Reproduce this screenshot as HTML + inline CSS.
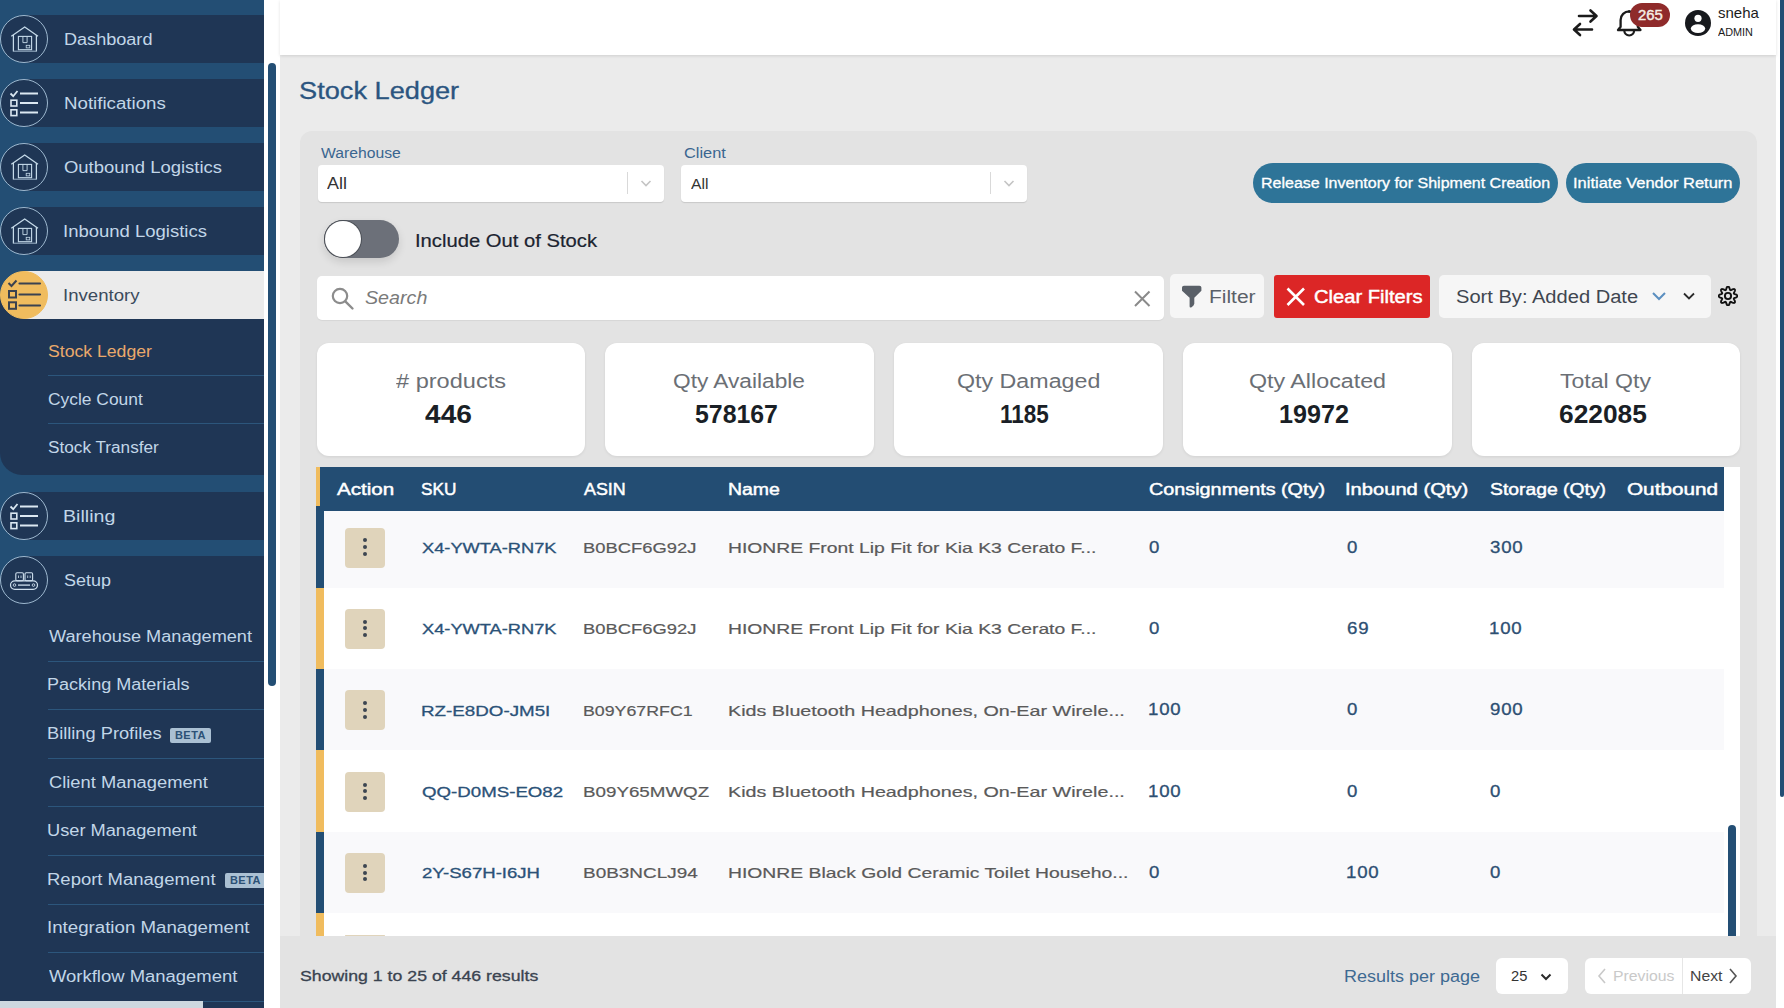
<!DOCTYPE html>
<html><head><meta charset="utf-8"><style>
html,body{margin:0;padding:0;}
body{width:1784px;height:1008px;overflow:hidden;position:relative;background:#fff;font-family:"Liberation Sans",sans-serif;}
.b{position:absolute;}
.t{position:absolute;white-space:nowrap;line-height:1;transform-origin:0 0;z-index:5;}
.beta{background:#aac0d3;color:#2c5176;font-size:11px;font-weight:700;line-height:15px;text-align:center;letter-spacing:0.5px;border-radius:2px;}
</style></head><body>
<div class="b" style="left:0px;top:0px;width:264px;height:1008px;background:#234e74;"></div>
<div class="b" style="left:24px;top:15px;width:240px;height:48px;background:#1f3655;"></div>
<div class="b" style="left:24px;top:79px;width:240px;height:48px;background:#1f3655;"></div>
<div class="b" style="left:24px;top:143px;width:240px;height:48px;background:#1f3655;"></div>
<div class="b" style="left:24px;top:207px;width:240px;height:48px;background:#1f3655;"></div>
<div class="b" style="left:24px;top:492px;width:240px;height:48px;background:#1f3655;"></div>
<div class="b" style="left:24px;top:556px;width:240px;height:48px;background:#1f3655;"></div>
<div class="b" style="left:0px;top:580px;width:264px;height:428px;background:#1f3655;"></div>
<div class="b" style="left:24px;top:271px;width:240px;height:48px;background:#ebebeb;"></div>
<div class="b" style="left:0px;top:295px;width:264px;height:180px;background:#1f3655;border-bottom-left-radius:22px;"></div>
<div class="b" style="left:24px;top:271px;width:240px;height:48px;background:#ebebeb;"></div>
<div class="b" style="left:48px;top:375px;width:216px;height:1px;background:#2c567c;"></div>
<div class="b" style="left:48px;top:423px;width:216px;height:1px;background:#2c567c;"></div>
<div class="b" style="left:48px;top:661px;width:216px;height:1px;background:#2c567c;"></div>
<div class="b" style="left:48px;top:709px;width:216px;height:1px;background:#2c567c;"></div>
<div class="b" style="left:48px;top:758px;width:216px;height:1px;background:#2c567c;"></div>
<div class="b" style="left:48px;top:806px;width:216px;height:1px;background:#2c567c;"></div>
<div class="b" style="left:48px;top:855px;width:216px;height:1px;background:#2c567c;"></div>
<div class="b" style="left:48px;top:904px;width:216px;height:1px;background:#2c567c;"></div>
<div class="b" style="left:48px;top:952px;width:216px;height:1px;background:#2c567c;"></div>
<div class="b" style="left:48px;top:1001px;width:216px;height:1px;background:#2c567c;"></div>
<svg class="b" style="left:0;top:0px" width="56" height="80" viewBox="0 0 56 80"><circle cx="24" cy="39" r="23.5" fill="#1f3655" stroke="#9db8cf" stroke-width="1"/><path d="M11.3 36.2 L24.7 27 L38 36.2" fill="none" stroke="#c6dbea" stroke-width="1.25"/>
<path d="M13.4 35 V51.5 M36.4 35 V51.5" stroke="#c6dbea" stroke-width="1.25"/>
<path d="M13.4 51.2 H36.4" stroke="#9fb6ca" stroke-width="1"/>
<rect x="18.4" y="36.4" width="13.2" height="13.3" fill="none" stroke="#c6dbea" stroke-width="1.1"/>
<path d="M22.9 36.4 V42.6 H27.1 V36.4" fill="none" stroke="#c6dbea" stroke-width="0.9"/>
<rect x="26.2" y="45.3" width="3.6" height="2.6" fill="none" stroke="#c6dbea" stroke-width="0.8"/></svg>
<svg class="b" style="left:0;top:64px" width="56" height="80" viewBox="0 0 56 80"><circle cx="24" cy="39" r="23.5" fill="#1f3655" stroke="#9db8cf" stroke-width="1"/><g transform="translate(0,0)">
<path d="M10.5 29.5 L13.2 32.2 L17.5 27" fill="none" stroke="#dbe8f2" stroke-width="1.8"/>
<rect x="11" y="36.2" width="5.8" height="5.8" fill="none" stroke="#dbe8f2" stroke-width="1.6"/>
<rect x="11" y="45.8" width="5.8" height="5.8" fill="none" stroke="#dbe8f2" stroke-width="1.6"/>
<path d="M20 29.5 H38 M20 39 H38 M20 48.5 H38" stroke="#dbe8f2" stroke-width="1.8"/>
</g></svg>
<svg class="b" style="left:0;top:128px" width="56" height="80" viewBox="0 0 56 80"><circle cx="24" cy="39" r="23.5" fill="#1f3655" stroke="#9db8cf" stroke-width="1"/><path d="M11.3 36.2 L24.7 27 L38 36.2" fill="none" stroke="#c6dbea" stroke-width="1.25"/>
<path d="M13.4 35 V51.5 M36.4 35 V51.5" stroke="#c6dbea" stroke-width="1.25"/>
<path d="M13.4 51.2 H36.4" stroke="#9fb6ca" stroke-width="1"/>
<rect x="18.4" y="36.4" width="13.2" height="13.3" fill="none" stroke="#c6dbea" stroke-width="1.1"/>
<path d="M22.9 36.4 V42.6 H27.1 V36.4" fill="none" stroke="#c6dbea" stroke-width="0.9"/>
<rect x="26.2" y="45.3" width="3.6" height="2.6" fill="none" stroke="#c6dbea" stroke-width="0.8"/></svg>
<svg class="b" style="left:0;top:192px" width="56" height="80" viewBox="0 0 56 80"><circle cx="24" cy="39" r="23.5" fill="#1f3655" stroke="#9db8cf" stroke-width="1"/><path d="M11.3 36.2 L24.7 27 L38 36.2" fill="none" stroke="#c6dbea" stroke-width="1.25"/>
<path d="M13.4 35 V51.5 M36.4 35 V51.5" stroke="#c6dbea" stroke-width="1.25"/>
<path d="M13.4 51.2 H36.4" stroke="#9fb6ca" stroke-width="1"/>
<rect x="18.4" y="36.4" width="13.2" height="13.3" fill="none" stroke="#c6dbea" stroke-width="1.1"/>
<path d="M22.9 36.4 V42.6 H27.1 V36.4" fill="none" stroke="#c6dbea" stroke-width="0.9"/>
<rect x="26.2" y="45.3" width="3.6" height="2.6" fill="none" stroke="#c6dbea" stroke-width="0.8"/></svg>
<svg class="b" style="left:0;top:256px" width="56" height="80" viewBox="0 0 56 80"><circle cx="24" cy="39" r="23.5" fill="#f0bc5e" stroke="#f0bc5e" stroke-width="1"/><path d="M8.5 27 L11.5 30 L16.5 24.5" fill="none" stroke="#3a4250" stroke-width="2"/>
<rect x="9" y="35" width="7" height="6.5" fill="none" stroke="#3a4250" stroke-width="2"/>
<rect x="9" y="46.3" width="7" height="6.5" fill="none" stroke="#3a4250" stroke-width="2"/>
<path d="M19.5 27.5 H40 M19.5 38.5 H40 M19.5 49.5 H40" stroke="#3a4250" stroke-width="2.2" stroke-linecap="round"/></svg>
<svg class="b" style="left:0;top:477px" width="56" height="80" viewBox="0 0 56 80"><circle cx="24" cy="39" r="23.5" fill="#1f3655" stroke="#9db8cf" stroke-width="1"/><g transform="translate(0,0)">
<path d="M10.5 29.5 L13.2 32.2 L17.5 27" fill="none" stroke="#dbe8f2" stroke-width="1.8"/>
<rect x="11" y="36.2" width="5.8" height="5.8" fill="none" stroke="#dbe8f2" stroke-width="1.6"/>
<rect x="11" y="45.8" width="5.8" height="5.8" fill="none" stroke="#dbe8f2" stroke-width="1.6"/>
<path d="M20 29.5 H38 M20 39 H38 M20 48.5 H38" stroke="#dbe8f2" stroke-width="1.8"/>
</g></svg>
<svg class="b" style="left:0;top:541px" width="56" height="80" viewBox="0 0 56 80"><circle cx="24" cy="39" r="23.5" fill="#1f3655" stroke="#9db8cf" stroke-width="1"/><g transform="translate(0,4.5)"><rect x="10.5" y="35.3" width="27" height="8.6" rx="4.3" fill="none" stroke="#cfe0ee" stroke-width="1.2"/>
<rect x="15.8" y="27.3" width="7.6" height="8" rx="1.2" fill="none" stroke="#cfe0ee" stroke-width="1.1"/>
<rect x="25" y="27.3" width="7.6" height="8" rx="1.2" fill="none" stroke="#cfe0ee" stroke-width="1.1"/>
<path d="M18.5 30 V32.5 M21 30 V32.5 M27.7 30 V32.5 M30.2 30 V32.5" stroke="#cfe0ee" stroke-width="0.8"/>
<path d="M18 39.6 H30" stroke="#cfe0ee" stroke-width="1.3"/>
<circle cx="14.5" cy="39.6" r="1.3" fill="none" stroke="#cfe0ee" stroke-width="0.9"/>
<circle cx="33.5" cy="39.6" r="1.3" fill="none" stroke="#cfe0ee" stroke-width="0.9"/></g></svg>
<div class="b beta" style="left:170px;top:727.5px;width:41px;height:15px">BETA</div>
<div class="b beta" style="left:225px;top:873px;width:41px;height:15px">BETA</div>
<div class="b" style="left:0px;top:1001px;width:203px;height:7px;background:#cdd8e0;"></div>
<div class="b" style="left:264px;top:0px;width:16px;height:1008px;background:#ffffff;"></div>
<div class="b" style="left:268px;top:63px;width:8px;height:623px;background:#234e74;border-radius:4px;"></div>
<div class="b" style="left:280px;top:55px;width:1496px;height:953px;background:#ebebeb;"></div>
<div class="b" style="left:280px;top:0px;width:1496px;height:55px;background:#ffffff;box-shadow:0 1px 3px rgba(0,0,0,.12);z-index:2;"></div>
<div class="b" style="left:1776px;top:0px;width:8px;height:1008px;background:#ffffff;"></div>
<div class="b" style="left:1780px;top:0px;width:4px;height:797px;background:#234e74;border-radius:0 0 2px 2px;"></div>
<svg class="b" style="left:1568px;top:6px;z-index:3" width="36" height="36" viewBox="0 0 36 36">
<path d="M11 10 H28 M22.5 4.5 L28.5 10 L22.5 15.5" fill="none" stroke="#1b1b1b" stroke-width="2.6" stroke-linecap="round" stroke-linejoin="round"/>
<path d="M24 23.5 H6.5 M12 18 L6 23.5 L12 29" fill="none" stroke="#1b1b1b" stroke-width="2.6" stroke-linecap="round" stroke-linejoin="round"/>
</svg>
<svg class="b" style="left:1612px;top:6px;z-index:3" width="36" height="36" viewBox="0 0 36 36">
<path d="M6 24 H28.5 L25.8 20.8 V14 A8.6 8.6 0 0 0 8.6 14 V20.8 Z" fill="none" stroke="#1b1b1b" stroke-width="2.3" stroke-linejoin="round"/>
<path d="M12.3 24.6 A4.9 4.9 0 0 0 22.1 24.6" fill="none" stroke="#1b1b1b" stroke-width="2.2"/>
<circle cx="17.2" cy="5.6" r="1.3" fill="#1b1b1b"/>
</svg>
<div class="b" style="left:1630px;top:3px;width:40px;height:24px;border-radius:12px;background:#8f2b2b;z-index:3"></div>
<svg class="b" style="left:1684px;top:9px;z-index:3" width="28" height="28" viewBox="0 0 28 28">
<circle cx="14" cy="14" r="13" fill="#17191d"/>
<circle cx="14" cy="9.3" r="3.6" fill="#fff"/>
<ellipse cx="14" cy="19.6" rx="7.2" ry="4.4" fill="#fff"/>
</svg>
<div class="b" style="left:300px;top:131px;width:1457px;height:900px;background:#e3e3e3;border-radius:12px;"></div>
<div class="b" style="left:317.5px;top:165px;width:346px;height:37px;background:#fff;border-radius:4px;box-shadow:0 1px 1px rgba(0,0,0,.12);"></div><div class="b" style="left:626.5px;top:172px;width:1px;height:22px;background:#d9d9d9;"></div><svg class="b" style="left:639.5px;top:177px" width="12" height="12" viewBox="0 0 12 12"><path d="M1.5 4 L6 8.5 L10.5 4" fill="none" stroke="#c4c4c4" stroke-width="1.6"/></svg>
<div class="b" style="left:681px;top:165px;width:346px;height:37px;background:#fff;border-radius:4px;box-shadow:0 1px 1px rgba(0,0,0,.12);"></div><div class="b" style="left:990px;top:172px;width:1px;height:22px;background:#d9d9d9;"></div><svg class="b" style="left:1003px;top:177px" width="12" height="12" viewBox="0 0 12 12"><path d="M1.5 4 L6 8.5 L10.5 4" fill="none" stroke="#c4c4c4" stroke-width="1.6"/></svg>
<div class="b" style="left:1253px;top:163px;width:305px;height:40px;background:#2e7498;border-radius:20px;"></div>
<div class="b" style="left:1566px;top:163px;width:174px;height:40px;background:#2e7498;border-radius:20px;"></div>
<div class="b" style="left:324px;top:220px;width:75px;height:38px;background:#6c7079;border-radius:19px;box-shadow:0 4px 8px rgba(0,0,0,.12);"></div>
<div class="b" style="left:325px;top:221px;width:36px;height:36px;background:#fff;border-radius:50%;box-shadow:0 0 0 1px #4a4e55;"></div>
<div class="b" style="left:317px;top:276px;width:847px;height:44px;background:#fff;border-radius:5px;box-shadow:0 1px 1px rgba(0,0,0,.06);"></div>
<svg class="b" style="left:330px;top:286px" width="26" height="26" viewBox="0 0 26 26">
<circle cx="10" cy="10" r="7.2" fill="none" stroke="#8c8c8c" stroke-width="2.2"/>
<path d="M15.3 15.3 L22.5 22.5" stroke="#8c8c8c" stroke-width="2.4" stroke-linecap="round"/></svg>
<svg class="b" style="left:1132px;top:289px" width="20" height="20" viewBox="0 0 20 20">
<path d="M3 2.5 L17.5 17 M17.5 2.5 L3 17" stroke="#8a8a8a" stroke-width="2"/></svg>
<div class="b" style="left:1170px;top:274px;width:94px;height:44px;background:#f6f6f6;border-radius:5px;"></div>
<svg class="b" style="left:1180px;top:284px" width="24" height="26" viewBox="0 0 24 26">
<path d="M2 3.6 Q2 1.8 4 1.8 H19.4 Q21.4 1.8 21.4 3.6 V6.8 L14.3 13.8 V19.8 Q14.1 21.4 11.6 23.2 Q9.6 24.3 9.6 22.2 V13.8 L2 6.8 Z" fill="#5a6068"/></svg>
<div class="b" style="left:1274px;top:275px;width:156px;height:43px;background:#dc2626;border-radius:3px;"></div>
<svg class="b" style="left:1284px;top:286px" width="24" height="22" viewBox="0 0 24 22">
<path d="M3.5 2.5 L20 19 M20 2.5 L3.5 19" stroke="#fff" stroke-width="2.6"/></svg>
<div class="b" style="left:1439px;top:275px;width:272px;height:43px;background:#f6f6f6;border-radius:5px;"></div>
<svg class="b" style="left:1650px;top:289px" width="18" height="14" viewBox="0 0 18 14">
<path d="M3 4 L9 10 L15 4" fill="none" stroke="#5b8fc0" stroke-width="2"/></svg>
<svg class="b" style="left:1681px;top:289px" width="16" height="14" viewBox="0 0 16 14">
<path d="M3 4.5 L8 9.5 L13 4.5" fill="none" stroke="#2b2b2b" stroke-width="1.8"/></svg>
<svg class="b" style="left:1717.6px;top:286.2px" width="20" height="20" viewBox="0 0 20 20">
<polygon points="19.50,10.00 19.27,10.61 18.63,11.14 17.75,11.54 16.86,11.84 16.17,12.09 15.82,12.41 15.84,12.88 16.15,13.55 16.57,14.39 16.90,15.30 16.98,16.12 16.72,16.72 16.12,16.98 15.30,16.90 14.39,16.57 13.55,16.15 12.88,15.84 12.41,15.82 12.09,16.17 11.84,16.86 11.54,17.75 11.14,18.63 10.61,19.27 10.00,19.50 9.39,19.27 8.86,18.63 8.46,17.75 8.16,16.86 7.91,16.17 7.59,15.82 7.12,15.84 6.45,16.15 5.61,16.57 4.70,16.90 3.88,16.98 3.28,16.72 3.02,16.12 3.10,15.30 3.43,14.39 3.85,13.55 4.16,12.88 4.18,12.41 3.83,12.09 3.14,11.84 2.25,11.54 1.37,11.14 0.73,10.61 0.50,10.00 0.73,9.39 1.37,8.86 2.25,8.46 3.14,8.16 3.83,7.91 4.18,7.59 4.16,7.12 3.85,6.45 3.43,5.61 3.10,4.70 3.02,3.88 3.28,3.28 3.88,3.02 4.70,3.10 5.61,3.43 6.45,3.85 7.12,4.16 7.59,4.18 7.91,3.83 8.16,3.14 8.46,2.25 8.86,1.37 9.39,0.73 10.00,0.50 10.61,0.73 11.14,1.37 11.54,2.25 11.84,3.14 12.09,3.83 12.41,4.18 12.88,4.16 13.55,3.85 14.39,3.43 15.30,3.10 16.12,3.02 16.72,3.28 16.98,3.88 16.90,4.70 16.57,5.61 16.15,6.45 15.84,7.12 15.82,7.59 16.17,7.91 16.86,8.16 17.75,8.46 18.63,8.86 19.27,9.39" fill="none" stroke="#111" stroke-width="1.9" stroke-linejoin="round"/>
<circle cx="10" cy="10" r="3.1" fill="none" stroke="#111" stroke-width="1.9"/></svg>
<div class="b" style="left:316.5px;top:343px;width:268.5px;height:112.5px;background:#fff;border-radius:12px;box-shadow:0 1px 3px rgba(0,0,0,.08);"></div>
<div class="b" style="left:605px;top:343px;width:268.5px;height:112.5px;background:#fff;border-radius:12px;box-shadow:0 1px 3px rgba(0,0,0,.08);"></div>
<div class="b" style="left:894px;top:343px;width:268.5px;height:112.5px;background:#fff;border-radius:12px;box-shadow:0 1px 3px rgba(0,0,0,.08);"></div>
<div class="b" style="left:1183px;top:343px;width:268.5px;height:112.5px;background:#fff;border-radius:12px;box-shadow:0 1px 3px rgba(0,0,0,.08);"></div>
<div class="b" style="left:1471.5px;top:343px;width:268.5px;height:112.5px;background:#fff;border-radius:12px;box-shadow:0 1px 3px rgba(0,0,0,.08);"></div>
<div class="b" style="left:316px;top:467px;width:1424px;height:469px;background:#ffffff;"></div>
<div class="b" style="left:324px;top:505px;width:1400px;height:82.60000000000002px;background:#f9f9fb;"></div>
<div class="b" style="left:316px;top:505px;width:8px;height:82.60000000000002px;background:#234e74;"></div>
<div class="b" style="left:324px;top:587.6px;width:1400px;height:81.39999999999998px;background:#ffffff;"></div>
<div class="b" style="left:316px;top:587.6px;width:8px;height:81.39999999999998px;background:#f0bc5e;"></div>
<div class="b" style="left:324px;top:669px;width:1400px;height:81.39999999999998px;background:#f9f9fb;"></div>
<div class="b" style="left:316px;top:669px;width:8px;height:81.39999999999998px;background:#234e74;"></div>
<div class="b" style="left:324px;top:750.4px;width:1400px;height:81.39999999999998px;background:#ffffff;"></div>
<div class="b" style="left:316px;top:750.4px;width:8px;height:81.39999999999998px;background:#f0bc5e;"></div>
<div class="b" style="left:324px;top:831.8px;width:1400px;height:81.40000000000009px;background:#f9f9fb;"></div>
<div class="b" style="left:316px;top:831.8px;width:8px;height:81.40000000000009px;background:#234e74;"></div>
<div class="b" style="left:324px;top:913.2px;width:1400px;height:22.799999999999955px;background:#ffffff;"></div>
<div class="b" style="left:316px;top:913.2px;width:8px;height:22.799999999999955px;background:#f0bc5e;"></div>
<div class="b" style="left:316px;top:467px;width:1408px;height:43.5px;background:#234d73;"></div>
<div class="b" style="left:316px;top:467px;width:4px;height:38.5px;background:#f0bc5e;"></div>
<div class="b" style="left:344.5px;top:527.5px;width:40px;height:40px;background:#e0d4bb;border-radius:4px;"></div>
<div class="b" style="left:362.6px;top:538.3px;width:4px;height:4px;background:#3d4651;border-radius:50%;"></div>
<div class="b" style="left:362.6px;top:545.0px;width:4px;height:4px;background:#3d4651;border-radius:50%;"></div>
<div class="b" style="left:362.6px;top:551.7px;width:4px;height:4px;background:#3d4651;border-radius:50%;"></div>
<div class="b" style="left:344.5px;top:608.9px;width:40px;height:40px;background:#e0d4bb;border-radius:4px;"></div>
<div class="b" style="left:362.6px;top:619.7px;width:4px;height:4px;background:#3d4651;border-radius:50%;"></div>
<div class="b" style="left:362.6px;top:626.4px;width:4px;height:4px;background:#3d4651;border-radius:50%;"></div>
<div class="b" style="left:362.6px;top:633.1px;width:4px;height:4px;background:#3d4651;border-radius:50%;"></div>
<div class="b" style="left:344.5px;top:690.3px;width:40px;height:40px;background:#e0d4bb;border-radius:4px;"></div>
<div class="b" style="left:362.6px;top:701.1px;width:4px;height:4px;background:#3d4651;border-radius:50%;"></div>
<div class="b" style="left:362.6px;top:707.8px;width:4px;height:4px;background:#3d4651;border-radius:50%;"></div>
<div class="b" style="left:362.6px;top:714.5px;width:4px;height:4px;background:#3d4651;border-radius:50%;"></div>
<div class="b" style="left:344.5px;top:771.7px;width:40px;height:40px;background:#e0d4bb;border-radius:4px;"></div>
<div class="b" style="left:362.6px;top:782.5px;width:4px;height:4px;background:#3d4651;border-radius:50%;"></div>
<div class="b" style="left:362.6px;top:789.2px;width:4px;height:4px;background:#3d4651;border-radius:50%;"></div>
<div class="b" style="left:362.6px;top:795.9px;width:4px;height:4px;background:#3d4651;border-radius:50%;"></div>
<div class="b" style="left:344.5px;top:853.1px;width:40px;height:40px;background:#e0d4bb;border-radius:4px;"></div>
<div class="b" style="left:362.6px;top:863.9px;width:4px;height:4px;background:#3d4651;border-radius:50%;"></div>
<div class="b" style="left:362.6px;top:870.6px;width:4px;height:4px;background:#3d4651;border-radius:50%;"></div>
<div class="b" style="left:362.6px;top:877.3px;width:4px;height:4px;background:#3d4651;border-radius:50%;"></div>
<div class="b" style="left:344.5px;top:934.5px;width:40px;height:1.5px;background:#e0d4bb;border-radius:4px;"></div>
<div class="b" style="left:1728px;top:825px;width:8px;height:111px;background:#234e74;border-radius:4px 4px 0 0;"></div>
<div class="b" style="left:280px;top:936px;width:1496px;height:72px;background:#e3e3e3;"></div>
<div class="b" style="left:1496px;top:958px;width:72px;height:36px;background:#fff;border-radius:6px;"></div>
<svg class="b" style="left:1538px;top:969.5px" width="16" height="14" viewBox="0 0 16 14">
<path d="M3.5 4.5 L8 9 L12.5 4.5" fill="none" stroke="#2b2b2b" stroke-width="2"/></svg>
<div class="b" style="left:1585px;top:958px;width:166px;height:36px;background:#fff;border-radius:6px;"></div>
<div class="b" style="left:1681.5px;top:958px;width:1px;height:36px;background:#e6e6e6;"></div>
<svg class="b" style="left:1596px;top:967px" width="12" height="18" viewBox="0 0 12 18">
<path d="M9 2 L3 9 L9 16" fill="none" stroke="#c9c9c9" stroke-width="1.6"/></svg>
<svg class="b" style="left:1727px;top:967px" width="12" height="18" viewBox="0 0 12 18">
<path d="M3 2 L9 9 L3 16" fill="none" stroke="#555" stroke-width="1.6"/></svg>
<div class="t" style="left:64.17px;top:32.06px;font-size:16px;color:#c2d6e8;transform:scaleX(1.1300);">Dashboard</div>
<div class="t" style="left:63.63px;top:96.06px;font-size:16px;color:#c2d6e8;transform:scaleX(1.1678);">Notifications</div>
<div class="t" style="left:64.10px;top:160.06px;font-size:16px;color:#c2d6e8;transform:scaleX(1.1535);">Outbound Logistics</div>
<div class="t" style="left:62.94px;top:224.06px;font-size:16px;color:#c2d6e8;transform:scaleX(1.1560);">Inbound Logistics</div>
<div class="t" style="left:62.94px;top:287.66px;font-size:16px;color:#3b4a5c;transform:scaleX(1.1618);">Inventory</div>
<div class="t" style="left:63.07px;top:509.06px;font-size:16px;color:#c2d6e8;transform:scaleX(1.2258);">Billing</div>
<div class="t" style="left:64.30px;top:573.06px;font-size:16px;color:#c2d6e8;transform:scaleX(1.1213);">Setup</div>
<div class="t" style="left:48.20px;top:343.86px;font-size:16px;color:#eaa96b;transform:scaleX(1.1016);">Stock Ledger</div>
<div class="t" style="left:48.20px;top:391.86px;font-size:16px;color:#c2d6e8;transform:scaleX(1.0878);">Cycle Count</div>
<div class="t" style="left:48.20px;top:439.86px;font-size:16px;color:#c2d6e8;transform:scaleX(1.0739);">Stock Transfer</div>
<div class="t" style="left:48.60px;top:628.86px;font-size:16px;color:#c2d6e8;transform:scaleX(1.1335);">Warehouse Management</div>
<div class="t" style="left:47.47px;top:677.41px;font-size:16px;color:#c2d6e8;transform:scaleX(1.1279);">Packing Materials</div>
<div class="t" style="left:47.46px;top:725.96px;font-size:16px;color:#c2d6e8;transform:scaleX(1.1399);">Billing Profiles</div>
<div class="t" style="left:48.60px;top:774.51px;font-size:16px;color:#c2d6e8;transform:scaleX(1.1450);">Client Management</div>
<div class="t" style="left:47.46px;top:823.06px;font-size:16px;color:#c2d6e8;transform:scaleX(1.1390);">User Management</div>
<div class="t" style="left:47.44px;top:871.61px;font-size:16px;color:#c2d6e8;transform:scaleX(1.1553);">Report Management</div>
<div class="t" style="left:47.43px;top:920.16px;font-size:16px;color:#c2d6e8;transform:scaleX(1.1676);">Integration Management</div>
<div class="t" style="left:48.60px;top:968.71px;font-size:16px;color:#c2d6e8;transform:scaleX(1.1533);">Workflow Management</div>
<div class="t" style="left:1718.00px;top:5.20px;font-size:15px;color:#1b1b1b;">sneha</div>
<div class="t" style="left:1718.00px;top:26.79px;font-size:11px;color:#1b1b1b;transform:scaleX(0.9859);">ADMIN</div>
<div class="t" style="left:1637.50px;top:7.95px;font-size:14px;color:#f5efe6;transform:scaleX(1.0606);-webkit-text-stroke:0.4px #f5efe6;">265</div>
<div class="t" style="left:299.24px;top:79.51px;font-size:23.5px;color:#2b5580;transform:scaleX(1.1566);-webkit-text-stroke:0.3px #2b5580;">Stock Ledger</div>
<div class="t" style="left:321.00px;top:146.35px;font-size:14px;color:#3a6690;transform:scaleX(1.1222);">Warehouse</div>
<div class="t" style="left:684.20px;top:146.35px;font-size:14px;color:#3a6690;transform:scaleX(1.1698);">Client</div>
<div class="t" style="left:327.20px;top:175.66px;font-size:16px;color:#333333;transform:scaleX(1.1204);">All</div>
<div class="t" style="left:690.80px;top:176.85px;font-size:14px;color:#333333;transform:scaleX(1.1199);">All</div>
<div class="t" style="left:1260.86px;top:176.15px;font-size:14px;color:#ffffff;transform:scaleX(1.1429);-webkit-text-stroke:0.3px #fff;">Release Inventory for Shipment Creation</div>
<div class="t" style="left:1572.62px;top:176.15px;font-size:14px;color:#ffffff;transform:scaleX(1.1778);-webkit-text-stroke:0.3px #fff;">Initiate Vendor Return</div>
<div class="t" style="left:414.68px;top:231.56px;font-size:18px;color:#1c2430;transform:scaleX(1.1228);-webkit-text-stroke:0.2px #1c2430;">Include Out of Stock</div>
<div class="t" style="left:365.20px;top:289.46px;font-size:18px;color:#7a7a7a;font-style:italic;transform:scaleX(1.0926);">Search</div>
<div class="t" style="left:1209.44px;top:287.76px;font-size:18px;color:#5a6068;transform:scaleX(1.1640);">Filter</div>
<div class="t" style="left:1313.90px;top:287.76px;font-size:18px;color:#ffffff;transform:scaleX(1.1184);-webkit-text-stroke:0.45px #fff;">Clear Filters</div>
<div class="t" style="left:1455.50px;top:287.76px;font-size:18px;color:#3f4650;transform:scaleX(1.1165);">Sort By: Added Date</div>
<div class="t" style="left:395.70px;top:371.07px;font-size:20px;color:#6b6f75;transform:scaleX(1.1779);"># products</div>
<div class="t" style="left:424.70px;top:402.14px;font-size:25px;color:#1a1f26;font-weight:700;transform:scaleX(1.1272);">446</div>
<div class="t" style="left:672.70px;top:371.07px;font-size:20px;color:#6b6f75;transform:scaleX(1.1334);">Qty Available</div>
<div class="t" style="left:695.20px;top:402.14px;font-size:25px;color:#1a1f26;font-weight:700;transform:scaleX(0.9937);">578167</div>
<div class="t" style="left:957.00px;top:371.07px;font-size:20px;color:#6b6f75;transform:scaleX(1.1614);">Qty Damaged</div>
<div class="t" style="left:1000.10px;top:402.14px;font-size:25px;color:#1a1f26;font-weight:700;transform:scaleX(0.9000);">1185</div>
<div class="t" style="left:1248.50px;top:371.07px;font-size:20px;color:#6b6f75;transform:scaleX(1.1628);">Qty Allocated</div>
<div class="t" style="left:1278.99px;top:402.14px;font-size:25px;color:#1a1f26;font-weight:700;transform:scaleX(1.0057);">19972</div>
<div class="t" style="left:1560.20px;top:371.07px;font-size:20px;color:#6b6f75;transform:scaleX(1.1531);">Total Qty</div>
<div class="t" style="left:1558.70px;top:402.14px;font-size:25px;color:#1a1f26;font-weight:700;transform:scaleX(1.0537);">622085</div>
<div class="t" style="left:336.60px;top:481.66px;font-size:16px;color:#ffffff;transform:scaleX(1.2876);-webkit-text-stroke:0.45px #fff;">Action</div>
<div class="t" style="left:421.30px;top:481.66px;font-size:16px;color:#ffffff;transform:scaleX(1.0729);-webkit-text-stroke:0.45px #fff;">SKU</div>
<div class="t" style="left:583.50px;top:481.66px;font-size:16px;color:#ffffff;transform:scaleX(1.1172);-webkit-text-stroke:0.45px #fff;">ASIN</div>
<div class="t" style="left:728.18px;top:481.66px;font-size:16px;color:#ffffff;transform:scaleX(1.2159);-webkit-text-stroke:0.45px #fff;">Name</div>
<div class="t" style="left:1148.80px;top:481.66px;font-size:16px;color:#ffffff;transform:scaleX(1.2372);-webkit-text-stroke:0.45px #fff;">Consignments (Qty)</div>
<div class="t" style="left:1345.44px;top:481.66px;font-size:16px;color:#ffffff;transform:scaleX(1.2591);-webkit-text-stroke:0.45px #fff;">Inbound (Qty)</div>
<div class="t" style="left:1490.20px;top:481.66px;font-size:16px;color:#ffffff;transform:scaleX(1.2079);-webkit-text-stroke:0.45px #fff;">Storage (Qty)</div>
<div class="t" style="left:1627.40px;top:481.66px;font-size:16px;color:#ffffff;transform:scaleX(1.2943);-webkit-text-stroke:0.45px #fff;">Outbound</div>
<div class="t" style="left:421.80px;top:539.80px;font-size:15px;color:#2b5278;transform:scaleX(1.2165);-webkit-text-stroke:0.3px #2b5278;">X4-YWTA-RN7K</div>
<div class="t" style="left:583.08px;top:539.80px;font-size:15px;color:#5a5a5a;transform:scaleX(1.2247);-webkit-text-stroke:0.2px #5a5a5a;">B0BCF6G92J</div>
<div class="t" style="left:728.11px;top:539.80px;font-size:15px;color:#5a5a5a;transform:scaleX(1.2884);-webkit-text-stroke:0.2px #5a5a5a;">HIONRE Front Lip Fit for Kia K3 Cerato F...</div>
<div class="t" style="left:1148.80px;top:538.53px;font-size:16.5px;color:#2d4f72;letter-spacing:0.7px;transform:scaleX(1.13);-webkit-text-stroke:0.3px #2d4f72;">0</div>
<div class="t" style="left:1346.70px;top:538.53px;font-size:16.5px;color:#2d4f72;letter-spacing:0.7px;transform:scaleX(1.13);-webkit-text-stroke:0.3px #2d4f72;">0</div>
<div class="t" style="left:1490.30px;top:538.53px;font-size:16.5px;color:#2d4f72;letter-spacing:0.7px;transform:scaleX(1.13);-webkit-text-stroke:0.3px #2d4f72;">300</div>
<div class="t" style="left:421.80px;top:621.20px;font-size:15px;color:#2b5278;transform:scaleX(1.2165);-webkit-text-stroke:0.3px #2b5278;">X4-YWTA-RN7K</div>
<div class="t" style="left:583.08px;top:621.20px;font-size:15px;color:#5a5a5a;transform:scaleX(1.2247);-webkit-text-stroke:0.2px #5a5a5a;">B0BCF6G92J</div>
<div class="t" style="left:728.11px;top:621.20px;font-size:15px;color:#5a5a5a;transform:scaleX(1.2884);-webkit-text-stroke:0.2px #5a5a5a;">HIONRE Front Lip Fit for Kia K3 Cerato F...</div>
<div class="t" style="left:1148.80px;top:619.93px;font-size:16.5px;color:#2d4f72;letter-spacing:0.7px;transform:scaleX(1.13);-webkit-text-stroke:0.3px #2d4f72;">0</div>
<div class="t" style="left:1346.70px;top:619.93px;font-size:16.5px;color:#2d4f72;letter-spacing:0.7px;transform:scaleX(1.13);-webkit-text-stroke:0.3px #2d4f72;">69</div>
<div class="t" style="left:1489.30px;top:619.93px;font-size:16.5px;color:#2d4f72;letter-spacing:0.7px;transform:scaleX(1.13);-webkit-text-stroke:0.3px #2d4f72;">100</div>
<div class="t" style="left:420.55px;top:702.60px;font-size:15px;color:#2b5278;transform:scaleX(1.2514);-webkit-text-stroke:0.3px #2b5278;">RZ-E8DO-JM5I</div>
<div class="t" style="left:583.12px;top:702.60px;font-size:15px;color:#5a5a5a;transform:scaleX(1.1841);-webkit-text-stroke:0.2px #5a5a5a;">B09Y67RFC1</div>
<div class="t" style="left:728.09px;top:702.60px;font-size:15px;color:#5a5a5a;transform:scaleX(1.3148);-webkit-text-stroke:0.2px #5a5a5a;">Kids Bluetooth Headphones, On-Ear Wirele...</div>
<div class="t" style="left:1147.80px;top:701.33px;font-size:16.5px;color:#2d4f72;letter-spacing:0.7px;transform:scaleX(1.13);-webkit-text-stroke:0.3px #2d4f72;">100</div>
<div class="t" style="left:1346.70px;top:701.33px;font-size:16.5px;color:#2d4f72;letter-spacing:0.7px;transform:scaleX(1.13);-webkit-text-stroke:0.3px #2d4f72;">0</div>
<div class="t" style="left:1490.30px;top:701.33px;font-size:16.5px;color:#2d4f72;letter-spacing:0.7px;transform:scaleX(1.13);-webkit-text-stroke:0.3px #2d4f72;">900</div>
<div class="t" style="left:421.80px;top:784.00px;font-size:15px;color:#2b5278;transform:scaleX(1.2450);-webkit-text-stroke:0.3px #2b5278;">QQ-D0MS-EO82</div>
<div class="t" style="left:583.05px;top:784.00px;font-size:15px;color:#5a5a5a;transform:scaleX(1.2508);-webkit-text-stroke:0.2px #5a5a5a;">B09Y65MWQZ</div>
<div class="t" style="left:728.09px;top:784.00px;font-size:15px;color:#5a5a5a;transform:scaleX(1.3148);-webkit-text-stroke:0.2px #5a5a5a;">Kids Bluetooth Headphones, On-Ear Wirele...</div>
<div class="t" style="left:1147.80px;top:782.73px;font-size:16.5px;color:#2d4f72;letter-spacing:0.7px;transform:scaleX(1.13);-webkit-text-stroke:0.3px #2d4f72;">100</div>
<div class="t" style="left:1346.70px;top:782.73px;font-size:16.5px;color:#2d4f72;letter-spacing:0.7px;transform:scaleX(1.13);-webkit-text-stroke:0.3px #2d4f72;">0</div>
<div class="t" style="left:1490.30px;top:782.73px;font-size:16.5px;color:#2d4f72;letter-spacing:0.7px;transform:scaleX(1.13);-webkit-text-stroke:0.3px #2d4f72;">0</div>
<div class="t" style="left:421.80px;top:865.40px;font-size:15px;color:#2b5278;transform:scaleX(1.2382);-webkit-text-stroke:0.3px #2b5278;">2Y-S67H-I6JH</div>
<div class="t" style="left:583.04px;top:865.40px;font-size:15px;color:#5a5a5a;transform:scaleX(1.2620);-webkit-text-stroke:0.2px #5a5a5a;">B0B3NCLJ94</div>
<div class="t" style="left:728.11px;top:865.40px;font-size:15px;color:#5a5a5a;transform:scaleX(1.2890);-webkit-text-stroke:0.2px #5a5a5a;">HIONRE Black Gold Ceramic Toilet Househo...</div>
<div class="t" style="left:1148.80px;top:864.13px;font-size:16.5px;color:#2d4f72;letter-spacing:0.7px;transform:scaleX(1.13);-webkit-text-stroke:0.3px #2d4f72;">0</div>
<div class="t" style="left:1345.70px;top:864.13px;font-size:16.5px;color:#2d4f72;letter-spacing:0.7px;transform:scaleX(1.13);-webkit-text-stroke:0.3px #2d4f72;">100</div>
<div class="t" style="left:1490.30px;top:864.13px;font-size:16.5px;color:#2d4f72;letter-spacing:0.7px;transform:scaleX(1.13);-webkit-text-stroke:0.3px #2d4f72;">0</div>
<div class="t" style="left:300.30px;top:968.33px;font-size:15.2px;color:#3a4350;transform:scaleX(1.1660);-webkit-text-stroke:0.3px #3a4350;">Showing 1 to 25 of 446 results</div>
<div class="t" style="left:1343.65px;top:968.69px;font-size:15.6px;color:#3e6a92;transform:scaleX(1.1539);">Results per page</div>
<div class="t" style="left:1511.00px;top:968.10px;font-size:15px;color:#333333;transform:scaleX(0.9791);">25</div>
<div class="t" style="left:1612.65px;top:968.10px;font-size:15px;color:#c9c9c9;transform:scaleX(1.0517);">Previous</div>
<div class="t" style="left:1689.75px;top:968.10px;font-size:15px;color:#444444;transform:scaleX(1.0530);">Next</div>
</body></html>
